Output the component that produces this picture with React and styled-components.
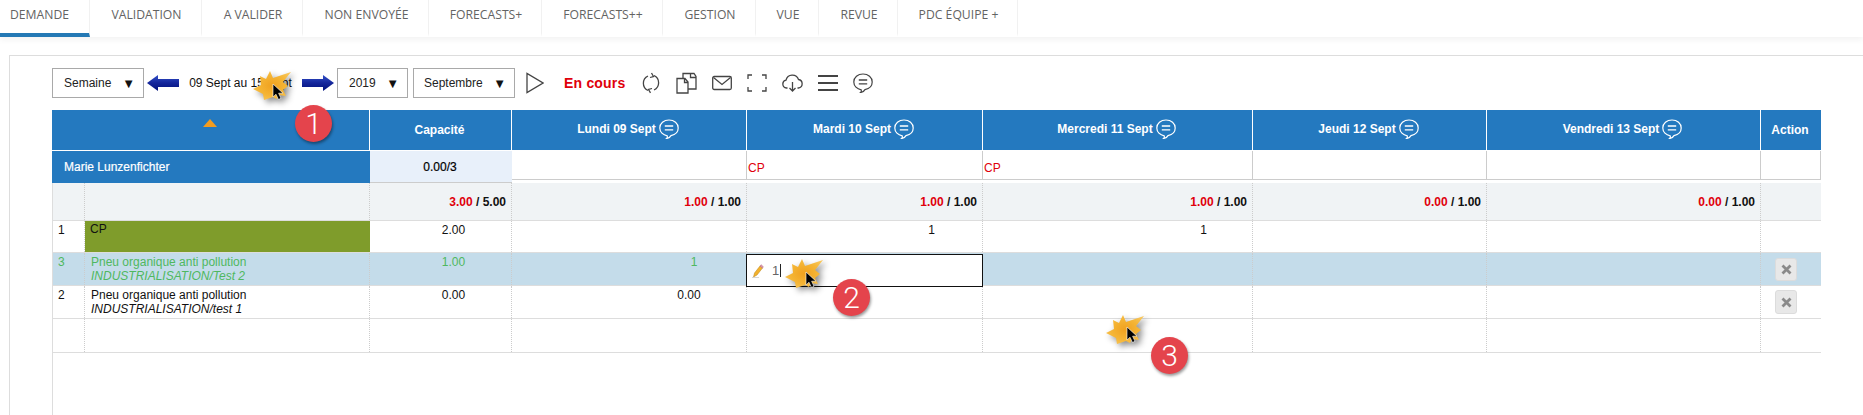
import React from "react";
import styled, { createGlobalStyle } from "styled-components";

const Global = createGlobalStyle`
  html, body { margin: 0; padding: 0; background: #fff; }
  body { font-family: "Liberation Sans", Arial, sans-serif; font-size: 12px; color: #111; overflow: hidden; }
`;

const Page = styled.div`
  position: relative;
  width: 1863px;
  height: 415px;
  overflow: hidden;
`;

const TabBar = styled.nav`
  display: flex;
  height: 37px;
  box-shadow: 0 3px 6px rgba(0, 0, 0, 0.05);
`;

const Tab = styled.div`
  width: ${(p) => p.$w}px;
  box-sizing: border-box;
  display: flex;
  align-items: center;
  justify-content: ${(p) => (p.$active ? "flex-start" : "center")};
  padding-left: ${(p) => (p.$active ? "10px" : "2px")};
  padding-bottom: 4px;
  border-right: 1px solid #f1f1f1;
  border-bottom: 4px solid ${(p) => (p.$active ? "#2479b5" : "transparent")};
  font-family: "Open Sans", sans-serif;
  font-size: 12.2px;
  color: #636363;
  white-space: nowrap;
`;

const Panel = styled.section`
  margin: 18px 0 0 9px;
  height: 360px;
  box-sizing: border-box;
  border-top: 1px solid #ddd;
  border-left: 1px solid #ddd;
  padding: 12px 0 0 42px;
`;

const Toolbar = styled.div`
  display: flex;
  align-items: center;
  height: 30px;
  margin-bottom: 12px;
`;

const Select = styled.div`
  width: ${(p) => p.$w}px;
  height: 30px;
  box-sizing: border-box;
  margin-right: ${(p) => p.$mr}px;
  border: 1px solid #a9a9a9;
  background: #fff;
  display: flex;
  align-items: center;
  justify-content: space-between;
  padding: 0 8px 0 ${(p) => p.$pl}px;
  color: #222;
  font-size: 12px;
`;

const Caret = styled.span`
  font-size: 13px;
  color: #111;
`;

const WeekLabel = styled.span`
  width: 123px;
  text-align: center;
  color: #111;
  font-size: 12px;
  white-space: nowrap;
`;

const Status = styled.span`
  margin: 0 16px 0 20px;
  color: #e0000b;
  font-weight: bold;
  font-size: 14px;
  letter-spacing: 0.2px;
  white-space: nowrap;
`;

const ToolIcon = styled.svg`
  width: ${(p) => p.$w}px;
  height: 22px;
  margin-right: ${(p) => p.$mr}px;
  fill: none;
  stroke: #444;
  stroke-width: ${(p) => p.$sw || 1.3};
  flex: none;
`;

const COLUMNS = "33px 285px 142px 235px 236px 270px 234px 274px 60px";

const Table = styled.div`
  width: 1769px;
  height: 305px;
  box-sizing: border-box;
`;

const HeaderRow = styled.div`
  display: grid;
  grid-template-columns: ${COLUMNS};
  height: 41px;
  background: #2479bf;
  border-bottom: 1px solid #fff;
  box-sizing: border-box;
`;

const HeadCell = styled.div`
  grid-column: span ${(p) => p.$span || 1};
  display: flex;
  align-items: center;
  justify-content: center;
  gap: 3px;
  color: #fff;
  font-weight: bold;
  font-size: 12px;
  border-right: 1px solid #fff;
  padding: 0 2px ${(p) => p.$pb || 0}px 0;
  box-sizing: border-box;
  &:last-child { border-right: none; }
`;

const SortMark = styled.span`
  width: 0;
  height: 0;
  border-left: 7.5px solid transparent;
  border-right: 7.5px solid transparent;
  border-bottom: 8px solid #f39c1f;
  margin-bottom: 15px;
`;

const ResourceRow = styled.div`
  display: grid;
  grid-template-columns: ${COLUMNS};
  height: 32px;
`;

const ResourceName = styled.div`
  grid-column: span 2;
  background: #2479bf;
  color: #fff;
  font-size: 12px;
  -webkit-text-stroke: 0.2px #fff;
  display: flex;
  align-items: center;
  padding-left: 12px;
`;

const CapacityCell = styled.div`
  background: #e8f0fa;
  border-bottom: 1px solid #ccc;
  box-sizing: border-box;
  display: flex;
  align-items: center;
  justify-content: center;
  font-size: 12px;
  -webkit-text-stroke: 0.2px #000;
  color: #000;
  padding-right: 2px;
`;

const AbsenceCell = styled.div`
  height: 29px;
  box-sizing: border-box;
  border-right: 1px solid #ccc;
  border-bottom: 1px solid #ccc;
  color: #e0000b;
  font-size: 12px;
  padding: 10px 0 0 1px;
`;

const Row = styled.div`
  display: grid;
  grid-template-columns: ${COLUMNS};
  height: ${(p) => p.$h}px;
  box-sizing: border-box;
  background: ${(p) => p.$bg || "transparent"};
  color: ${(p) => p.$color || "#111"};
  border-bottom: 1px solid #ddd;
  box-shadow: inset 1px 0 0 #ddd;
`;

const Cell = styled.div`
  box-sizing: border-box;
  border-right: 1px dotted #ccc;
  font-size: 12px;
  line-height: 14px;
  padding: 2px 0 0 ${(p) => p.$pl ?? 0}px;
  &:last-child { border-right: none; }
`;

const TotalCell = styled(Cell)`
  padding: 0 5px 0 0;
  display: flex;
  align-items: center;
  justify-content: flex-end;
  font-weight: bold;
  white-space: pre;
`;

const Red = styled.span`
  color: #e0000b;
`;

const ColorCell = styled(Cell)`
  background: #7f9c2b;
  color: #111;
  padding: 1px 0 0 5px;
  border-right: none;
`;

const Label = styled.div`
  white-space: nowrap;
`;

const Sub = styled.div`
  font-style: italic;
  white-space: nowrap;
`;

const ValueCell = styled(Cell)`
  text-align: center;
  padding: 2px 0 0 ${(p) => p.$shift || 0}px;
`;

const EditCell = styled.div`
  box-sizing: border-box;
  height: 33px;
  margin: 1px 0 0 -1px;
  background: #fff;
  border: 1.5px solid #111;
  display: flex;
  align-items: center;
  padding-left: 5px;
  color: #666;
  font-size: 13px;
  position: relative;
  z-index: 1;
`;

const Typed = styled.span`
  margin-left: 8px;
  padding-right: 1px;
  border-right: 1px solid #222;
  line-height: 13px;
`;

const ActionCell = styled(Cell)`
  padding: ${(p) => p.$pt}px 0 0 14px;
`;

const DeleteBtn = styled.div`
  width: 22px;
  height: ${(p) => p.$h}px;
  box-sizing: border-box;
  border: 1px solid #dcdcdc;
  border-radius: 3px;
  background: #e8e8e8;
  display: flex;
  align-items: center;
  justify-content: center;
`;

const Spark = styled.div`
  position: absolute;
  left: ${(p) => p.$x}px;
  top: ${(p) => p.$y}px;
  width: 38px;
  height: 29px;
  z-index: 3;
`;

const SparkSvg = styled.svg`
  display: block;
  filter: drop-shadow(3px 3px 3px rgba(0, 0, 0, 0.45));
  overflow: visible;
`;

const Badge = styled.div`
  position: absolute;
  left: ${(p) => p.$x}px;
  top: ${(p) => p.$y}px;
  width: 37px;
  height: 37px;
  border-radius: 50%;
  background: #e4444c;
  color: #fff;
  box-shadow: 1px 2px 3px rgba(0, 0, 0, 0.4);
  display: flex;
  align-items: center;
  justify-content: center;
  font-family: Roboto, sans-serif;
  font-weight: 300;
  font-size: 30px;
  z-index: 4;
`;

const BottomRail = styled.div`
  height: 70px;
  border-left: 1px solid #ddd;
`;

const Bubble = ({ color = "#fff", size = 20 }) => (
  <svg width={size} height={size} viewBox="0 0 20 20" fill="none" stroke={color} strokeWidth="1.2">
    <path d="M10 1C4.8 1 .8 4.4.8 9c0 4 3.2 7.2 7.4 7.8.3 1 .2 2-.6 2.700 2-.3 3.500-1.300 4.400-2.900 4-.9 7.200-3.800 7.200-7.600C19.200 4.400 15.200 1 10 1Z" />
    <path d="M5.800 7h8.400M5.800 10.800h8.400" strokeWidth="1.300" />
  </svg>
);

const BlueArrow = ({ flip, mr }) => (
  <svg
    width="32"
    height="16"
    viewBox="0 0 32 16"
    style={{ transform: flip ? "scaleX(-1)" : undefined, marginRight: mr, flex: "none" }}
  >
    <defs>
      <linearGradient id={flip ? "arrL" : "arrR"} x1="0" y1="0" x2="0" y2="1">
        <stop offset="0" stopColor="#3350c8" />
        <stop offset="0.5" stopColor="#14269b" />
        <stop offset="1" stopColor="#00107a" />
      </linearGradient>
    </defs>
    <path d="M0 4h21V0l11 8-11 8v-4H0Z" fill={`url(#${flip ? "arrL" : "arrR"})`} />
  </svg>
);

const Burst = ({ x, y, tipX, tipY }) => (
  <Spark $x={x} $y={y}>
    <SparkSvg width="38" height="29" viewBox="0 0 38 29">
      <defs>
        <radialGradient id={`b${x}`} cx="0.5" cy="0.5" r="0.6">
          <stop offset="0" stopColor="#f0a11f" />
          <stop offset="0.6" stopColor="#f5b535" />
          <stop offset="1" stopColor="#f8c65a" />
        </radialGradient>
      </defs>
      <polygon
        points="0,18 8,14 7,5 13,8 17,0 20,7 26,5 38,1 30,11 35,15 30,19 33,25 26,24 24,28 20,26 11,29 10,23"
        fill={`url(#b${x})`}
      />
      <polygon
        points="0,0 0,13 3,10.200 5.500,15.500 8,14.300 5.600,9.200 10,9.200"
        transform={`translate(${tipX} ${tipY})`}
        fill="#000"
        stroke="#fff"
        strokeWidth="0.6"
      />
    </SparkSvg>
  </Spark>
);

const tabs = [
  ["DEMANDE", 90, true],
  ["VALIDATION", 112],
  ["A VALIDER", 101],
  ["NON ENVOYÉE", 126],
  ["FORECASTS+", 113],
  ["FORECASTS++", 121],
  ["GESTION", 93],
  ["VUE", 63],
  ["REVUE", 79],
  ["PDC ÉQUIPE +", 120],
];

const days = ["Lundi 09 Sept", "Mardi 10 Sept", "Mercredi 11 Sept", "Jeudi 12 Sept", "Vendredi 13 Sept"];
const totals = [["1.00", "1.00"], ["1.00", "1.00"], ["1.00", "1.00"], ["0.00", "1.00"], ["0.00", "1.00"]];
const absence = ["", "CP", "CP", "", "", ""];

const X = () => (
  <svg width="11" height="11" viewBox="0 0 11 11" stroke="#8a8a8a" strokeWidth="2.800">
    <path d="M1.500 1.500l8 8M9.500 1.500l-8 8" />
  </svg>
);

const Pencil = () => (
  <svg width="12" height="14" viewBox="0 0 12 14">
    <path d="M1.500 13l1-4L8 2l2.500 2L5 11Z" fill="#f3b22c" stroke="#b9821a" strokeWidth="0.500" />
    <path d="M8 2l1-1.300 2.300 2L10.500 4Z" fill="#e79ab0" stroke="#a8607a" strokeWidth="0.500" />
    <path d="M0 13.500h7" stroke="#ccc" strokeWidth="0.800" />
  </svg>
);

const EmptyCells = ({ n }) => Array.from({ length: n }, (_, i) => <Cell key={i} />);

export default function App() {
  return (
    <Page>
      <Global />
      <TabBar>
        {tabs.map(([t, w, a]) => (
          <Tab key={t} $w={w} $active={a}>{t}</Tab>
        ))}
      </TabBar>
      <Panel>
        <Toolbar>
          <Select $w={92} $mr={3} $pl={11}>Semaine <Caret>▼</Caret></Select>
          <BlueArrow flip />
          <WeekLabel>09 Sept au 15 Sept</WeekLabel>
          <BlueArrow mr={3} />
          <Select $w={71} $mr={5} $pl={11}>2019 <Caret>▼</Caret></Select>
          <Select $w={102} $mr={11} $pl={10}>Septembre <Caret>▼</Caret></Select>
          <ToolIcon $w={18} $mr={0} viewBox="0 0 18 22">
            <path d="M1 1.500v19l16-9.500Z" />
          </ToolIcon>
          <Status>En cours</Status>
          <ToolIcon $w={18} $mr={16} viewBox="0 0 18 22">
            <path d="M6 18.500A8 8 0 0 1 6 4M12 3.500a8 8 0 0 1 0 14.500" />
            <path d="M9.500 1L11.500 4.500 8 5.500M8.500 20.800L6.500 17.500 10 16.500" />
          </ToolIcon>
          <ToolIcon $w={21} $mr={15} viewBox="0 0 21 22">
            <path d="M1 6.500h8l3 3.500v11H1ZM8.500 6.500V10.500H12" />
            <path d="M7 6.500V1.500h11l2 3V17H12M14.500 1.500v4H20" />
          </ToolIcon>
          <ToolIcon $w={20} $mr={15} viewBox="0 0 20 22">
            <rect x="0.700" y="4.500" width="18.600" height="13" rx="1.500" />
            <path d="M1.500 5.500L10 12.500 18.500 5.500" />
          </ToolIcon>
          <ToolIcon $w={20} $mr={15} viewBox="0 0 20 22">
            <path d="M1 7V3h4M15 3h4v4M19 15v4h-4M5 19H1v-4" />
          </ToolIcon>
          <ToolIcon $w={21} $mr={15} viewBox="0 0 21 22">
            <path d="M5.500 16H4.500a4 4 0 0 1-.5-7.900A6.500 6.500 0 0 1 16.500 7.500a4.300 4.300 0 0 1 0 8.500H15.500" />
            <path d="M10.500 10v9M7.500 16l3 3 3-3" />
          </ToolIcon>
          <ToolIcon $w={20} $mr={15} $sw={2} viewBox="0 0 20 22">
            <path d="M0 4h20M0 11h20M0 18h20" />
          </ToolIcon>
          <Bubble color="#444" size={20} />
        </Toolbar>

        <Table>
          <HeaderRow>
            <HeadCell $span={2}><SortMark /></HeadCell>
            <HeadCell>Capacité</HeadCell>
            {days.map((d) => (
              <HeadCell key={d} $pb={3}>{d} <Bubble /></HeadCell>
            ))}
            <HeadCell>Action</HeadCell>
          </HeaderRow>

          <ResourceRow>
            <ResourceName>Marie Lunzenfichter</ResourceName>
            <CapacityCell>0.00/3</CapacityCell>
            {absence.map((a, i) => (
              <AbsenceCell key={i}>{a}</AbsenceCell>
            ))}
          </ResourceRow>

          <Row $h={38} $bg="#f0f3f5">
            <Cell />
            <Cell />
            <TotalCell><Red>3.00</Red> / 5.00</TotalCell>
            {totals.map(([a, b], i) => (
              <TotalCell key={i}><Red>{a}</Red> / {b}</TotalCell>
            ))}
            <Cell />
          </Row>

          <Row $h={32}>
            <Cell $pl={6}>1</Cell>
            <ColorCell>CP</ColorCell>
            <ValueCell $shift={26}>2.00</ValueCell>
            <Cell />
            <ValueCell $shift={134}>1</ValueCell>
            <ValueCell $shift={172}>1</ValueCell>
            <EmptyCells n={3} />
          </Row>

          <Row $h={33} $bg="#c4dcea" $color="#4fb85f">
            <Cell $pl={6}>3</Cell>
            <Cell $pl={6}>
              <Label>Pneu organique anti pollution</Label>
              <Sub>INDUSTRIALISATION/Test 2</Sub>
            </Cell>
            <ValueCell $shift={26}>1.00</ValueCell>
            <ValueCell $shift={130}>1</ValueCell>
            <EditCell>
              <Pencil />
              <Typed>1</Typed>
            </EditCell>
            <Cell />
            <Cell />
            <Cell />
            <ActionCell $pt={5}><DeleteBtn $h={23}><X /></DeleteBtn></ActionCell>
          </Row>

          <Row $h={33}>
            <Cell $pl={6}>2</Cell>
            <Cell $pl={6}>
              <Label>Pneu organique anti pollution</Label>
              <Sub>INDUSTRIALISATION/test 1</Sub>
            </Cell>
            <ValueCell $shift={26}>0.00</ValueCell>
            <ValueCell $shift={120}>0.00</ValueCell>
            <Cell />
            <Cell />
            <Cell />
            <Cell />
            <ActionCell $pt={4}><DeleteBtn $h={24}><X /></DeleteBtn></ActionCell>
          </Row>

          <Row $h={34}>
            <EmptyCells n={9} />
          </Row>
          <BottomRail />
        </Table>
      </Panel>

      <Burst x={253} y={71} tipX={20} tipY={13} />
      <Badge $x={295} $y={105}>1</Badge>
      <Burst x={785} y={259} tipX={21} tipY={13} />
      <Badge $x={833} $y={279}>2</Badge>
      <Burst x={1106} y={315} tipX={21} tipY={12} />
      <Badge $x={1151} $y={337}>3</Badge>
    </Page>
  );
}
